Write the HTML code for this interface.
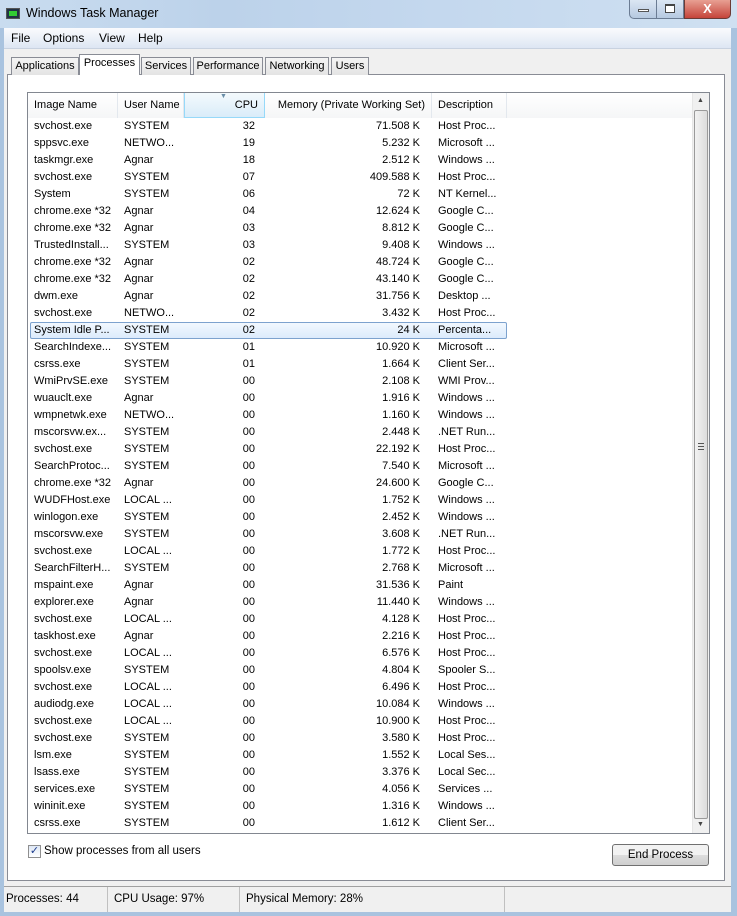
<!DOCTYPE html>
<html><head><meta charset="utf-8"><style>
*{margin:0;padding:0;box-sizing:border-box}
body{width:737px;height:916px;position:relative;overflow:hidden;font-family:"Liberation Sans",sans-serif;font-size:11px;color:#000;background:#a9c3df}
.abs{position:absolute}
#title{left:0;top:0;width:737px;height:28px;background:linear-gradient(90deg,#c9dcef,#bcd2ea 30%,#c4d8ee 60%,#cfe0f1)}
#client{left:4px;top:28px;width:727px;height:884px;background:#f0f0f0}
#menu{left:4px;top:28px;width:727px;height:21px;background:linear-gradient(#fafbfd,#dde6f3);border-bottom:1px solid #c8d2e0}
.tab{position:absolute;height:18px;top:57px;border:1px solid #898c95;border-bottom:none;background:linear-gradient(#f4f4f4,#e4e4e4);font-size:11px;text-align:center;line-height:17px;white-space:nowrap}
#panel{left:7px;top:74px;width:718px;height:807px;border:1px solid #898c95;background:#fff}
#list{left:27px;top:92px;width:683px;height:742px;border:1px solid #828790;background:#fff;overflow:hidden}
.hd{position:absolute;top:0;height:25px;line-height:25px;border-right:1px solid #e3e8ee;background:linear-gradient(#fff,#f5f6f7);padding:0 6px;white-space:nowrap}
.row{position:absolute;left:0;height:17px;line-height:17px;width:660px}
.row span{position:absolute;top:0;white-space:nowrap}
#sb{left:692px;top:93px;width:17px;height:740px;background:#f0f0f0;border-left:1px solid #e6e6e6}
#status{left:4px;top:886px;width:727px;height:26px;border-top:1px solid #a0a0a0;background:#f0f0f0}
.st{position:absolute;top:0;height:25px;line-height:25px;border-right:1px solid #c0c0c0;padding-left:2px;font-size:11.5px;white-space:nowrap}
</style></head><body>
<div id="title" class="abs"></div>
<div class="abs" style="left:6px;top:8px;width:14px;height:11px;background:#234;border:1px solid #555"><div style="margin:2px;width:8px;height:5px;background:#3c3"></div></div>
<div class="abs" style="left:26px;top:6px;font-size:12.5px">Windows Task Manager</div>
<div class="abs" style="left:629px;top:0;width:28px;height:19px;border:1px solid #6b7c93;border-top:none;border-radius:0 0 0 5px;background:linear-gradient(#dbe6f3,#b6c9e0)"><div style="margin:9px 8px 0;width:11px;height:3px;background:#fff;border:1px solid #555"></div></div>
<div class="abs" style="left:657px;top:0;width:27px;height:19px;border:1px solid #6b7c93;border-top:none;border-left:none;background:linear-gradient(#dbe6f3,#b6c9e0)"><div style="margin:4px 8px 0;width:10px;height:9px;border:1px solid #444;border-top-width:2px;background:#fff"></div></div>
<div class="abs" style="left:684px;top:0;width:47px;height:19px;border:1px solid #6b3b36;border-top:none;border-radius:0 0 5px 0;background:linear-gradient(#e8a093,#c5443a);color:#fff;font-weight:bold;text-align:center;font-size:13px;line-height:17px">X</div>
<div id="client" class="abs"></div>
<div id="menu" class="abs"><span style="position:absolute;left:7px;top:3px;font-size:12px">File</span><span style="position:absolute;left:39px;top:3px;font-size:12px">Options</span><span style="position:absolute;left:95px;top:3px;font-size:12px">View</span><span style="position:absolute;left:134px;top:3px;font-size:12px">Help</span></div>
<div id="panel" class="abs"></div>
<div class="tab" style="left:11px;width:68px">Applications</div>
<div class="tab" style="left:79px;width:61px;top:54px;height:21px;background:#fff;z-index:2">Processes</div>
<div class="tab" style="left:141px;width:50px">Services</div>
<div class="tab" style="left:193px;width:70px">Performance</div>
<div class="tab" style="left:265px;width:64px">Networking</div>
<div class="tab" style="left:331px;width:38px">Users</div>
<div id="list" class="abs">
<div class="hd" style="left:0;width:90px">Image Name</div>
<div class="hd" style="left:90px;width:66px">User Name</div>
<div class="hd" style="left:156px;width:81px;text-align:right;background:linear-gradient(#f4fafd,#d9ecf9);border:1px solid #96d9f9;border-top:none">CPU<div style="position:absolute;left:35px;top:-9px;color:#6a8ea8;font-size:7px">▼</div></div>
<div class="hd" style="left:237px;width:167px;text-align:right">Memory (Private Working Set)</div>
<div class="hd" style="left:404px;width:75px">Description</div>
<div class="hd" style="left:479px;width:186px;border-right:none"></div>
<div style="position:absolute;left:2px;top:229px;width:477px;height:17px;background:linear-gradient(#f2f8fe,#dcebfc);border:1px solid #7da2ce;border-radius:2px"></div>
<div id="rows"></div>
</div>
<div id="sb" class="abs">
<div style="position:absolute;left:4px;top:4px;font-size:7px;color:#444">▲</div>
<div style="position:absolute;left:1px;top:17px;width:14px;height:709px;border:1px solid #9a9a9a;border-radius:2px;background:linear-gradient(90deg,#f2f2f2,#dcdcdc)"><div style="position:absolute;left:3px;top:332px;width:6px;height:7px;border-top:1px solid #555;border-bottom:1px solid #555;"><div style="margin-top:2px;border-top:1px solid #555"></div></div></div>
<div style="position:absolute;left:4px;top:728px;font-size:7px;color:#444">▼</div>
</div>
<div class="abs" style="left:28px;top:845px;width:13px;height:13px;border:1px solid #8f8f8f;background:linear-gradient(#dfe8f5,#fff);color:#1c3c8c;font-size:11px;line-height:11px;text-align:center">✓</div>
<div class="abs" style="left:44px;top:845px;font-size:11.5px">Show processes from all users</div>
<div class="abs" style="left:612px;top:844px;width:97px;height:22px;border:1px solid #707070;border-radius:3px;background:linear-gradient(#f2f2f2 50%,#dddddd 50%,#cfcfcf);text-align:center;line-height:20px;font-size:11.5px">End Process</div>
<div id="status" class="abs">
<div class="st" style="left:0;width:104px">Processes: 44</div>
<div class="st" style="left:104px;width:132px;padding-left:6px">CPU Usage: 97%</div>
<div class="st" style="left:236px;width:265px;padding-left:6px">Physical Memory: 28%</div>
</div>
<script>
var d=`svchost.exe|SYSTEM|32|71.508 K|Host Proc...
sppsvc.exe|NETWO...|19|5.232 K|Microsoft ...
taskmgr.exe|Agnar|18|2.512 K|Windows ...
svchost.exe|SYSTEM|07|409.588 K|Host Proc...
System|SYSTEM|06|72 K|NT Kernel...
chrome.exe *32|Agnar|04|12.624 K|Google C...
chrome.exe *32|Agnar|03|8.812 K|Google C...
TrustedInstall...|SYSTEM|03|9.408 K|Windows ...
chrome.exe *32|Agnar|02|48.724 K|Google C...
chrome.exe *32|Agnar|02|43.140 K|Google C...
dwm.exe|Agnar|02|31.756 K|Desktop ...
svchost.exe|NETWO...|02|3.432 K|Host Proc...
System Idle P...|SYSTEM|02|24 K|Percenta...
SearchIndexe...|SYSTEM|01|10.920 K|Microsoft ...
csrss.exe|SYSTEM|01|1.664 K|Client Ser...
WmiPrvSE.exe|SYSTEM|00|2.108 K|WMI Prov...
wuauclt.exe|Agnar|00|1.916 K|Windows ...
wmpnetwk.exe|NETWO...|00|1.160 K|Windows ...
mscorsvw.ex...|SYSTEM|00|2.448 K|.NET Run...
svchost.exe|SYSTEM|00|22.192 K|Host Proc...
SearchProtoc...|SYSTEM|00|7.540 K|Microsoft ...
chrome.exe *32|Agnar|00|24.600 K|Google C...
WUDFHost.exe|LOCAL ...|00|1.752 K|Windows ...
winlogon.exe|SYSTEM|00|2.452 K|Windows ...
mscorsvw.exe|SYSTEM|00|3.608 K|.NET Run...
svchost.exe|LOCAL ...|00|1.772 K|Host Proc...
SearchFilterH...|SYSTEM|00|2.768 K|Microsoft ...
mspaint.exe|Agnar|00|31.536 K|Paint
explorer.exe|Agnar|00|11.440 K|Windows ...
svchost.exe|LOCAL ...|00|4.128 K|Host Proc...
taskhost.exe|Agnar|00|2.216 K|Host Proc...
svchost.exe|LOCAL ...|00|6.576 K|Host Proc...
spoolsv.exe|SYSTEM|00|4.804 K|Spooler S...
svchost.exe|LOCAL ...|00|6.496 K|Host Proc...
audiodg.exe|LOCAL ...|00|10.084 K|Windows ...
svchost.exe|LOCAL ...|00|10.900 K|Host Proc...
svchost.exe|SYSTEM|00|3.580 K|Host Proc...
lsm.exe|SYSTEM|00|1.552 K|Local Ses...
lsass.exe|SYSTEM|00|3.376 K|Local Sec...
services.exe|SYSTEM|00|4.056 K|Services ...
wininit.exe|SYSTEM|00|1.316 K|Windows ...
csrss.exe|SYSTEM|00|1.612 K|Client Ser...`.split("\n");
var h="";
d.forEach(function(l,i){var c=l.split("|");var t=25+17*i;
h+='<div class="row" style="top:'+t+'px">'+
'<span style="left:6px">'+c[0]+'</span><span style="left:96px">'+c[1]+'</span>'+
'<span style="right:433px">'+c[2]+'</span><span style="right:268px">'+c[3]+'</span>'+
'<span style="left:410px">'+c[4]+'</span></div>';});
document.getElementById("rows").innerHTML=h;
</script>
</body></html>
